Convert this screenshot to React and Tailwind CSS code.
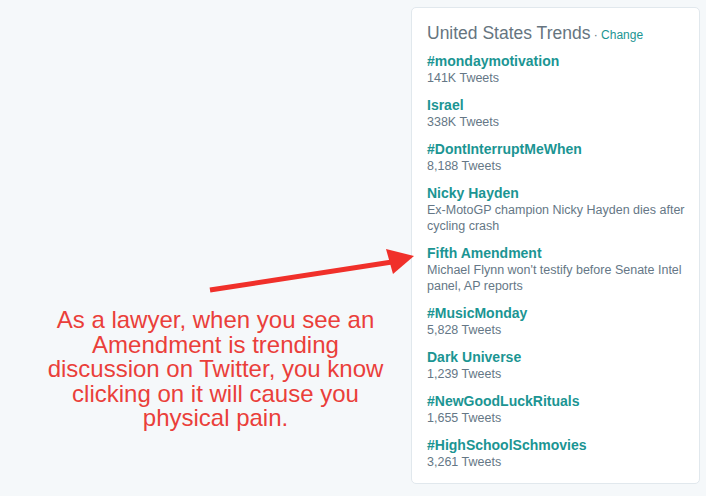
import React from 'react';

const trends = [
  { name: '#mondaymotivation', meta: '141K Tweets' },
  { name: 'Israel', meta: '338K Tweets' },
  { name: '#DontInterruptMeWhen', meta: '8,188 Tweets' },
  { name: 'Nicky Hayden', meta: 'Ex-MotoGP champion Nicky Hayden dies after cycling crash' },
  { name: 'Fifth Amendment', meta: "Michael Flynn won't testify before Senate Intel panel, AP reports" },
  { name: '#MusicMonday', meta: '5,828 Tweets' },
  { name: 'Dark Universe', meta: '1,239 Tweets' },
  { name: '#NewGoodLuckRituals', meta: '1,655 Tweets' },
  { name: '#HighSchoolSchmovies', meta: '3,261 Tweets' },
];

const TrendItem = ({ name, meta }) => (
  <li className="pb-[10px]">
    <div className="text-[14px] leading-[18px] font-bold text-[#1b9593]">{name}</div>
    <div className="text-[12.5px] leading-[16px] text-[#657786]">{meta}</div>
  </li>
);

const App = () => {
  return (
    <div
      className="relative w-[706px] h-[496px] bg-[#f5f8fa] flex overflow-hidden"
      style={{ fontFamily: '"Liberation Sans", Arial, sans-serif' }}
    >
      {/* annotation */}
      <div className="w-[411px] pl-[20px] flex flex-col items-center pt-[308px]">
        <p className="text-center text-[24px] leading-[24.6px] text-[#ea3f3a]">
          As a lawyer, when you see an
          <br />
          Amendment is trending
          <br />
          discussion on Twitter, you know
          <br />
          clicking on it will cause you
          <br />
          physical pain.
        </p>
      </div>

      {/* trends card */}
      <div className="mt-[7px] w-[289px] h-[477px] bg-white border border-[#e1e8ed] rounded-[5px] pl-[15px] pr-[4px] pt-[13px]">
        <h2 className="text-[17.5px] leading-[24px] text-[#66757f] mb-[5px]">
          United States Trends
          <span className="text-[12px]"> · </span>
          <span className="text-[12px] text-[#1b9593]">Change</span>
        </h2>
        <ul>
          {trends.map((t) => (
            <TrendItem key={t.name} {...t} />
          ))}
        </ul>
      </div>

      {/* arrow */}
      <svg className="absolute left-0 top-0 pointer-events-none" width="706" height="496">
        <line x1="210" y1="290" x2="392" y2="262" stroke="#f0302a" strokeWidth="5" />
        <polygon points="386,249 414,256 393,274" fill="#f0302a" />
      </svg>
    </div>
  );
};

export default App;
